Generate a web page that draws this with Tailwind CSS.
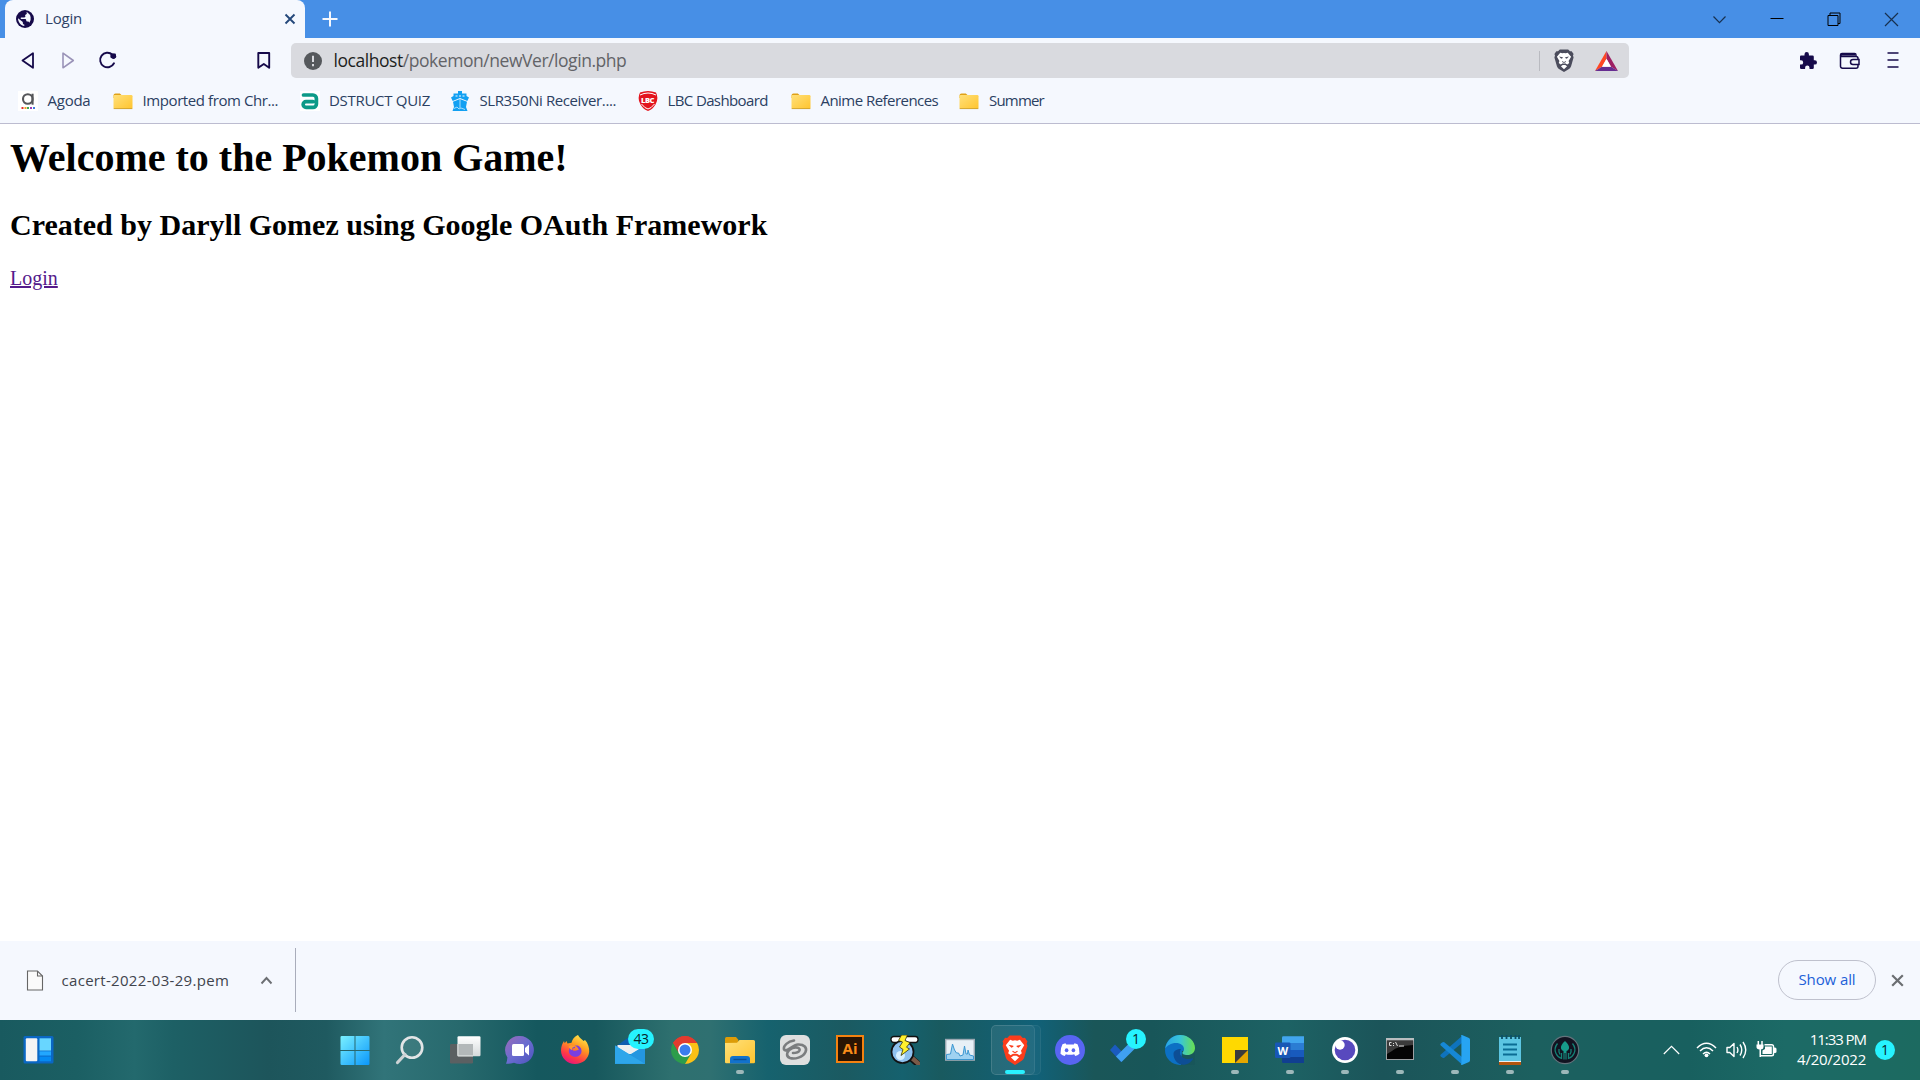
<!DOCTYPE html>
<html lang="en">
<head>
<meta charset="utf-8">
<title>Login</title>
<script src="https://cdn.jsdelivr.net/npm/@tailwindcss/browser@4"></script>
</head>
<body class="flex h-[1080px] w-[1920px] flex-col overflow-hidden bg-white font-['Open_Sans','Noto_Sans',sans-serif] text-[15px]">

<!-- Shared symbols -->
<svg class="absolute size-0">
  <defs>
    <linearGradient id="fold" x1="0" y1="0" x2="1" y2="1"><stop offset="0" stop-color="#ffe07a"/><stop offset="1" stop-color="#ffc42e"/></linearGradient>
    <symbol id="folder" viewBox="0 0 20 20">
      <path d="M.5 4.500a2 2 0 0 1 2-2h4.300l1.700 1.500v3h-8z" fill="#e0a117"/>
      <rect x=".5" y="4" width="19" height="14" rx="1.300" fill="url(#fold)"/>
      <path d="M.7 17.600h18.600" stroke="#c79a2e" stroke-width=".8"/>
    </symbol>
    <symbol id="lion" viewBox="0 0 24 28">
      <path d="M7 .5h10l2.200 2.300 2-.2L23.500 6l-.7 2 .7 2.200-3 10.800q-.5 1.800-2 2.900L12 28l-6.500-4.100q-1.500-1.100-2-2.900L.5 10.200 1.200 8 .5 6l2.300-3.400 2 .2z" fill="currentColor"/>
      <path d="M7.500 4.500l2.500.8 2-.4 2 .4 2.500-.8 4 5-3 5.200.8 2.300-2.300 1.800-2.700-1.300-.2 1.600 2.600 2L12 24.500l-3.700-3.400 2.600-2-.2-1.600L8 18.800 5.700 17l.8-2.300-3-5.200z" fill="#fff"/>
      <path d="M6 9.200l4.500.9v.9l-1.800.8zM18 9.200l-4.500.9v.9l1.800.8z" fill="currentColor"/>
      <path d="M9.700 15.200l2.300 1.300 2.300-1.300" stroke="currentColor" stroke-width="1.100" fill="none"/>
      <path d="M8.500 18.700l2.400-1.200h2.200l2.400 1.200-2.800.7h-1.400z" fill="currentColor"/>
    </symbol>
  </defs>
</svg>

<!-- Tab strip -->
<header class="flex h-[38px] shrink-0 items-center bg-[#478fe6] pl-[5px]">
  <div class="flex h-full w-[300px] items-center rounded-t-[8px] bg-[#f5f8fe] pl-[11px] pr-[9px]">
    <svg class="size-[18px]" viewBox="0 0 18 18"><circle cx="9" cy="9" r="9" fill="#160a4a"/><path d="M10.200 2c1 .8.900 2-.2 2.500-.9.400-1 1-.7 1.600.3.700-.2 1.300-1.100 1.300H5.500c-.7 0-1 .5-.8 1 .3.500 1 .5 2 .5h2.200c1 0 1.300.6 1.300 1.400 0 .9.500 1.200 1.300 1.200.9 0 1.600.4 1.900 1.200a7.200 7.200 0 0 0-1.900-10.200Q10.900 2.200 10.200 2z" fill="#f5f8fe"/><path d="M2 8.300c0 4 3 7.300 6.300 7.700v-1.500c-.9 0-1.500-.7-1.500-1.500v-.9z" fill="#f5f8fe"/></svg>
    <span class="ml-[11px] grow whitespace-nowrap pb-px tracking-[-0.200px] text-[#2f4367]">Login</span>
    <svg class="size-[12px]" viewBox="0 0 12 12"><path d="M1.500 1.500l9 9m0-9l-9 9" stroke="#24487a" stroke-width="1.900"/></svg>
  </div>
  <svg class="ml-[17px] size-[16px]" viewBox="0 0 16 16"><path d="M8 .5v15M.5 8h15" stroke="#f5f8fe" stroke-width="2"/></svg>
  <div class="ml-auto flex items-center gap-[43px] pr-[21.500px]">
    <svg class="size-[15px]" viewBox="0 0 15 15"><path d="M1.500 4.500l6 6.200 6-6.200" stroke="#17304f" stroke-width="1.200" fill="none"/></svg>
    <svg class="size-[14px]" viewBox="0 0 14 14"><path d="M.5 6.500h13" stroke="#000" stroke-width="1"/></svg>
    <svg class="size-[14px]" viewBox="0 0 14 14"><path d="M1 3.500h10v10H1zM3 3V1h10v10.500h-2" stroke="#000" stroke-width="1" fill="none"/></svg>
    <svg class="size-[15px]" viewBox="0 0 15 15"><path d="M1 1l13 13M14 1L1 14" stroke="#17304f" stroke-width="1.200"/></svg>
  </div>
</header>

<!-- Navigation bar -->
<nav class="flex h-[45px] shrink-0 items-center bg-[#f5f8fe] pl-[18px] pr-[17px] text-[#160a4a]">
  <svg class="size-5" viewBox="0 0 20 20"><path d="M15 2.200v14.600L4.500 9.500z" stroke="currentColor" stroke-width="1.800" stroke-linejoin="round" fill="none"/></svg>
  <svg class="ml-5 size-5" viewBox="0 0 20 20"><path d="M5 2.200v14.600L15.300 9.500z" stroke="#9a93b8" stroke-width="1.600" stroke-linejoin="round" fill="none"/></svg>
  <svg class="ml-5 size-5" viewBox="0 0 20 20"><path d="M14.300 3.500A7.300 7.300 0 1 0 16 12.300" stroke="currentColor" stroke-width="1.900" stroke-linecap="round" fill="none"/><path d="M12.500 3.100l5-.6.800 3.500-2.400 2-3.400-1.500z" fill="currentColor"/><circle cx="15.400" cy="5.100" r="2.700" fill="currentColor"/></svg>
  <svg class="ml-[136px] size-5" viewBox="0 0 20 20"><path d="M4.300 2h10.900v14.800L9.800 13l-5.500 3.800z" stroke="currentColor" stroke-width="1.900" stroke-linejoin="round" fill="none"/></svg>
  <div class="ml-[17px] flex h-[35px] w-[1338px] items-center rounded-[5px] bg-[#d9dadf] pl-[13px] pr-[11px]">
    <svg class="size-[18px]" viewBox="0 0 18 18"><circle cx="9" cy="9" r="9" fill="#55585c"/><path d="M9 3.800v6.200M9 12v2.300" stroke="#d9dadf" stroke-width="2"/></svg>
    <p class="ml-[11.500px] grow whitespace-nowrap text-[17.500px] tracking-[-0.450px] text-[#626367]"><span class="text-[#1d1e21]">localhost</span>/pokemon/newVer/login.php</p>
    <span class="h-5 w-px bg-[#b9bac0]"></span>
    <svg class="ml-[14px] h-[23px] w-5 text-[#4b4c5c]" viewBox="0 0 24 28" preserveAspectRatio="none"><use href="#lion" width="24" height="28"/></svg>
    <svg class="ml-[21px] h-[20px] w-[23px]" viewBox="0 0 23 20"><path d="M11.500 0L0 20l7-4.300 4.500-8z" fill="#ff4724"/><path d="M11.500 0L23 20l-7-4.300-4.500-8z" fill="#9e1f63"/><path d="M0 20h23l-7-4.300H7z" fill="#662d91"/><path d="M11.500 7.700L16 15.700H7z" fill="#fff"/></svg>
  </div>
  <svg class="ml-auto size-5" viewBox="0 0 20 20"><path d="M3 4.500h3.500V3.200a2.200 2.200 0 0 1 4.400 0v1.300h3.600q1.300 0 1.300 1.300v3.400h1a2.200 2.200 0 0 1 0 4.400h-1v3.100q0 1.300-1.300 1.300h-3v-1.200a2.200 2.200 0 0 0-4.400 0V18H3.300Q2 18 2 16.700v-3.100h1a2.200 2.200 0 0 0 0-4.400H2V5.800q0-1.300 1-1.300z" fill="currentColor"/></svg>
  <svg class="ml-[21.500px] h-5 w-[21px]" viewBox="0 0 21 20" fill="none" stroke="currentColor" stroke-width="1.500"><path d="M1.500 4v11.200a2 2 0 0 0 2 2h13.500a2 2 0 0 0 2-2V7.500a2 2 0 0 0-2-2H3a1.500 1.500 0 0 1 0-3h12.500a1.500 1.500 0 0 1 1.500 1.500v1.500M2 3.800h14"/><path d="M20 8.500h-6a2.500 2.500 0 0 0 0 5h6z" fill="#f5f8fe"/></svg>
  <svg class="ml-[22.500px] mr-[.5px] size-5" viewBox="0 0 20 20"><path d="M4.500 2h11M4.500 9h11M4.500 16h11" stroke="currentColor" stroke-width="1.700"/></svg>
</nav>

<!-- Bookmarks bar -->
<div class="flex h-[41px] shrink-0 items-center whitespace-nowrap border-b border-[#bcbcd0] bg-[#f5f8fe] pb-[5px] pl-[18px] text-[#2b4062]">
  <div class="flex w-[95px] items-center gap-[9.500px]">
    <svg class="size-5" viewBox="0 0 20 20"><path d="M0 0h20v20H0z" fill="#fff"/><circle cx="9.800" cy="8" r="4.800" stroke="#55565a" stroke-width="2.100" fill="none"/><path d="M14.600 2.700v11" stroke="#55565a" stroke-width="2"/><path d="M3.500 17h2" stroke="#e12d2d" stroke-width="2"/><path d="M6.500 17h2" stroke="#f2a121" stroke-width="2"/><path d="M9 17h2" stroke="#3aa757" stroke-width="2"/><path d="M12 17h2" stroke="#9b3fb5" stroke-width="2"/><path d="M15 17h2" stroke="#3c7ee0" stroke-width="2"/></svg>
    <span class="pb-px tracking-[-0.250px]">Agoda</span>
  </div>
  <div class="flex w-[186.500px] items-center gap-[9.500px]"><svg class="size-5"><use href="#folder"/></svg><span class="pb-px tracking-[-0.410px]">Imported from Chr...</span></div>
  <div class="flex w-[150.500px] items-center gap-[9.500px]">
    <svg class="size-5" viewBox="0 0 20 20"><path d="M0 0h20v20H0z" fill="#fff"/><path d="M3.500 4H13a3.400 3.400 0 0 1 3.400 3.400V13a3.400 3.400 0 0 1-3.400 3.400H6a2.800 2.800 0 0 1 0-5.700h7" stroke="#0d9a87" stroke-width="3.700" stroke-linecap="round" fill="none"/></svg>
    <span class="pb-px tracking-[-0.300px]">DSTRUCT QUIZ</span>
  </div>
  <div class="flex w-[187.500px] items-center gap-[9.500px]">
    <svg class="size-5" viewBox="0 0 20 20" fill="#12a0f2"><path d="M8 0h4v2.500h4.500V5L19 6.500 17.300 10l-7.300-3-7.300 3L1 6.500 3.500 5V2.500H8z"/><path d="M10 8l7 2.700-1 5.300 1.500 4h-15L4 16l-1-5.300z"/><path d="M5.500 4.500h2v1h-2zM9 4.500h2v1H9zM12.500 4.500h2v1h-2z" fill="#f5f8fe"/><path d="M10 8v9M4 17.500l3-1.500 2 2 2-1 4 1.500" stroke="#a6dcfc" stroke-width="1" fill="none"/></svg>
    <span class="pb-px tracking-[-0.400px]">SLR350Ni Receiver....</span>
  </div>
  <div class="flex w-[153px] items-center gap-[10px]">
    <div class="relative size-5"><svg class="size-5" viewBox="0 0 20 20"><path d="M2 1.500Q10-1.500 18 1.500q3 6-.5 12-3 5-7.500 6.500-4.500-1.500-7.500-6.500-3.500-6-.5-12z" fill="#e3141e"/><path d="M2 4q8-4 16 0M3.500 13Q7 17.500 10 18q3-.5 6.500-5" stroke="#fff" stroke-width="1" fill="none"/></svg><span class="absolute inset-x-0 top-[5px] text-center font-['Open_Sans',sans-serif] text-[7.500px] font-extrabold leading-[9px] tracking-[-0.500px] text-white">LBC</span></div>
    <span class="pb-px tracking-[-0.620px]">LBC Dashboard</span>
  </div>
  <div class="flex w-[168.500px] items-center gap-[10px]"><svg class="size-5"><use href="#folder"/></svg><span class="pb-px tracking-[-0.540px]">Anime References</span></div>
  <div class="flex items-center gap-[10px]"><svg class="size-5"><use href="#folder"/></svg><span class="pb-px tracking-[-0.800px]">Summer</span></div>
</div>

<!-- Page -->
<main class="grow px-[10px] pt-[11px] font-['Liberation_Serif',serif] text-black">
  <h1 class="text-[40px] font-bold leading-[46px]">Welcome to the Pokemon Game!</h1>
  <h2 class="mt-[27px] text-[30px] font-bold leading-[34px] tracking-[0.010px]">Created by Daryll Gomez using Google OAuth Framework</h2>
  <a class="mt-[25px] block w-fit text-[20px] leading-[23px] text-[#551a8b] underline" href="#">Login</a>
</main>

<!-- Download shelf -->
<section class="flex h-[79px] shrink-0 items-center bg-[#f5f8fe] pb-px pl-[26px] pr-[16px]">
  <svg class="h-[21px] w-[18px]" viewBox="0 0 18 21"><path d="M1.500 1h10l5 5v14h-15z" fill="#fafafa" stroke="#666" stroke-width="1.100"/><path d="M11.500 1v5h5" fill="none" stroke="#666" stroke-width="1.100"/></svg>
  <span class="ml-[17.500px] w-[198.500px] whitespace-nowrap tracking-[0.310px] text-[#40444d]">cacert-2022-03-29.pem</span>
  <svg class="h-[9px] w-[13px]" viewBox="0 0 13 9"><path d="M1.500 7.500l5-5.500 5 5.500" fill="none" stroke="#6c6f73" stroke-width="1.900"/></svg>
  <span class="ml-[22px] h-16 w-px bg-[#a9adbb]"></span>
  <button class="ml-auto h-10 w-[98px] rounded-full border border-[#bfc1cd] pb-px tracking-[-0.100px] text-[#2160d8]">Show all</button>
  <svg class="ml-[15px] size-[13px]" viewBox="0 0 13 13"><path d="M1.200 1.200l10.600 10.600m0-10.600L1.200 11.800" stroke="#6b6e72" stroke-width="2.200"/></svg>
</section>

<!-- Taskbar -->
<footer class="flex h-[60px] shrink-0 bg-[linear-gradient(90deg,#195a5f_0%,#1b5f63_4%,#23696d_7%,#1d6065_9%,#1d555b_14%,#1f5a60_17%,#317479_20%,#27696d_24%,#15585e_28%,#17585d_31%,#2e706f_35%,#2f7071_37%,#16626e_40%,#1b5a61_44%,#15616e_47%,#195a5f_49%,#116178_54%,#1a5658_57%,#185659_60%,#1d6264_67%,#1b5459_72%,#1c605f_80%,#18605f_88%,#1c6a66_93%,#1c6a60_100%)]">
  <svg class="ml-[22.500px] mt-[15px] h-[30px] w-[31px]" viewBox="0 0 31 30"><rect x=".5" y="1" width="30" height="27.500" rx="1.500" fill="#0a67c4"/><rect x="2.800" y="3.300" width="11.500" height="23" rx="1" fill="#f4f4f4"/><path d="M16.500 3.300h11.500v12.300H16.500z" fill="#68d6ff"/><path d="M16.500 16.300h11.500v4.300H16.500z" fill="#22a7ff"/><path d="M16.500 21.500h11.500v4.800H16.500z" fill="#058af2"/></svg>

  <div class="ml-[274px] flex">
    <div class="flex w-[55px] justify-center pt-[15px]"><svg class="size-[30px]" viewBox="0 0 30 30"><defs><linearGradient id="win" x1="0" y1="0" x2="30" y2="30" gradientUnits="userSpaceOnUse"><stop stop-color="#7df3ff"/><stop offset="1" stop-color="#0996fb"/></linearGradient></defs><path d="M.5 2.300q0-1.300 1.300-1.300h12.700v14H.5zM15.500 1h12.800q1.200 0 1.200 1.300V15h-14zM.5 16h14v14H1.800Q.5 30 .5 28.700zM15.500 16h14v12.700q0 1.300-1.200 1.300H15.500z" fill="url(#win)"/></svg></div>
    <div class="flex w-[55px] justify-center pt-[15px]"><svg class="size-[30px]" viewBox="0 0 30 30"><circle cx="17" cy="12.500" r="10.300" fill="#fff" fill-opacity=".07" stroke="#e2e5e6" stroke-width="2.600"/><path d="M10 19.500l-7.500 8" stroke="#cdd3d5" stroke-width="3.200" stroke-linecap="round"/></svg></div>
    <div class="flex w-[55px] justify-center pt-[15px]"><svg class="size-[30px] overflow-visible" viewBox="0 0 30 30"><defs><linearGradient id="tv" x1="0" y1="0" x2="0" y2="1"><stop stop-color="#fff"/><stop offset="1" stop-color="#d5dadb"/></linearGradient></defs><rect x="0" y="9" width="23" height="19.500" rx="1.200" fill="#5b6062"/><rect x="7.500" y="1.300" width="23" height="20" rx="1.200" fill="url(#tv)"/><path d="M7.500 9H23v12.300H7.500z" fill="#b3b8b9"/><path d="M8 9v11.800h15" stroke="#dde0e0" stroke-width="1" fill="none"/></svg></div>
    <div class="flex w-[55px] justify-center pt-[15px]"><svg class="size-[30px]" viewBox="0 0 30 30"><defs><linearGradient id="chat" x1="0" y1="0" x2="1" y2="1"><stop stop-color="#9a6bb8"/><stop offset=".5" stop-color="#6a6cd0"/><stop offset="1" stop-color="#4b53bc"/></linearGradient></defs><path d="M15 1a14 14 0 1 1-6 26.700Q5 29 1 28.800q1.200-3 1.400-6.300A14 14 0 0 1 15 1z" fill="url(#chat)"/><rect x="7" y="9" width="12" height="12" rx="1.500" fill="#fff"/><path d="M20 13l4-3.500v11L20 17z" fill="#fff"/></svg></div>
    <div class="flex w-[55px] justify-center pt-[15px]"><svg class="size-[30px]" viewBox="0 0 30 30"><defs><linearGradient id="ff" x1=".8" y1="0" x2=".3" y2="1"><stop stop-color="#fff04f"/><stop offset=".4" stop-color="#ff9a20"/><stop offset=".75" stop-color="#ff3a45"/><stop offset="1" stop-color="#e6127f"/></linearGradient></defs><path d="M18 0c1.500 3 4 4 5.500 6l1.500-1c3 3 4.500 8 4.200 12-.8 7-6.500 12-14.200 12S1 23 1 15.500c0-4 1.300-7 3-9.500l.7 2.300L6.500 6l1 2.500 4-.8C13 3 15 1.500 18 0z" fill="url(#ff)"/><path d="M10 11.500c2.500-1.500 5-.2 5.200 1.200l-3 1c0 2 2 2.500 4 1.800 1-.4 2-1 2.600-.2-.4-2-1.700-4-3.800-4.600 3-.8 6.500 1.300 6.500 5.200 0 3.500-3 5.800-6.300 5.800-3.600 0-6.400-2.500-6.400-6z" fill="#7a3fe0"/><path d="M8.500 12c1.500-2 4-2.500 6.500-.5l-2.500 1.200-1 2.500z" fill="#ff9d2b"/></svg></div>
    <div class="flex w-[55px] justify-center pt-[15px]"><div class="relative size-[30px]"><svg class="size-[30px]" viewBox="0 0 30 30"><path d="M0 12L14 2l16 10v6H0z" fill="#0e5db0"/><path d="M2.500 10h25v9h-25z" fill="#eceef0"/><path d="M0 10.500L15 20 30 10.500V28.700H0z" fill="#35b5f0"/><path d="M0 28.700L30 10.500v18.200z" fill="#2496e0"/><path d="M0 28.700h30L15 19.500z" fill="#1f8edb"/><path d="M0 10.500L30 28.700H0z" fill="#2ea6ea"/></svg><span class="absolute left-[13px] top-[-6px] flex h-5 w-[26px] items-center justify-center rounded-full bg-[#26f3ff] text-[14px] leading-none tracking-[-0.400px] text-[#07262b]">43</span></div></div>
    <div class="flex w-[55px] justify-center pt-[15px]"><svg class="size-[30px]" viewBox="0 0 30 30"><path d="M2.900 8A14 14 0 0 1 27.100 8L15 15z" fill="#e33b2e"/><path d="M15 8h12.100A14 14 0 0 0 2.900 8L9 18.500z" fill="#e33b2e"/><path d="M2.900 8A14 14 0 0 0 15 29l6.200-10.500L9 18.500z" fill="#2c9d4b"/><path d="M27.100 8H15l6.200 10.500L15 29A14 14 0 0 0 27.100 8z" fill="#fbc116"/><circle cx="15" cy="15" r="7" fill="#fff"/><circle cx="15" cy="15" r="5.500" fill="#3b7ded"/></svg></div>
    <div class="flex w-[55px] flex-col items-center pt-[15px]"><svg class="size-[30px]" viewBox="0 0 30 30"><path d="M0 3.500q0-1.500 1.500-1.500H11l2.500 3v5H0z" fill="#dd9c07"/><path d="M0 8l12-.3L14.500 5h14q1.500 0 1.500 1.500V27q0 1.300-1.300 1.300H1.300Q0 28.300 0 27z" fill="url(#fold)"/><path d="M5 28.500V24q0-3 3-3h14q3 0 3 3v4.500z" fill="#1272cc"/><path d="M8.500 24.500h13" stroke="#0a4f96" stroke-width="1.400"/></svg><span class="mt-[5px] h-1 w-2 rounded-full bg-[#9db8ba]"></span></div>
    <div class="flex w-[55px] justify-center pt-[15px]"><svg class="size-[30px]" viewBox="0 0 30 30"><rect width="30" height="30" rx="6" fill="#dedfdf"/><path d="M14 5.500C8 6.500 3 10.500 4 14.500c2.500 3.500 8-4.500 14-5 6-.3 9.500 3 7.500 7.500-2.500 5.500-11 7.500-15.500 6-5-2-3-8 2.500-10 4-1.500 8 0 7 2.500-1 2-4 2.500-6.500 2.500" stroke="#7b7d7f" stroke-width="2.600" stroke-linecap="round" fill="none"/></svg></div>
    <div class="flex w-[55px] justify-center pt-[15px]"><div class="flex h-[28px] w-[28px] items-center justify-center border-2 border-[#f58210] bg-[#2a1403] pb-[1px] text-[15px] font-bold leading-none text-[#fa8c19]">Ai</div></div>
    <div class="flex w-[55px] justify-center pt-[15px]"><svg class="size-[30px]" viewBox="0 0 30 30"><path d="M20 22l9 8" stroke="#111" stroke-width="6.500"/><path d="M22 23l8 7" stroke="#7a5a48" stroke-width="4.500"/><rect x="1" y="1.500" width="27" height="6" rx="2.800" fill="#fff" stroke="#111" stroke-width="1.300"/><circle cx="12.500" cy="17" r="11" fill="#8fc2ef" stroke="#111" stroke-width="1.700"/><circle cx="10.500" cy="20.500" r="4.500" fill="#d8f0ff"/><path d="M11.500 0h6L15 5.500l5 2.200-3.500 4.500 3 1.800-8.500 6.500 2-6-3.500-2.500 3-5-4-1.500z" fill="#fff12d" stroke="#383509" stroke-width=".8"/></svg></div>
    <div class="flex w-[55px] justify-center pt-[15px]"><svg class="size-[30px]" viewBox="0 0 30 30"><rect x=".7" y="4.500" width="28.600" height="20.600" fill="#e8f0f6" stroke="#9ba8b2" stroke-width="1.400"/><path d="M1.500 19.500l4-.5 2-10 2 6 2 3 2 0 1.500 3 3-1 1.500-9 1.500 8 1.500 0 .5-4 1.500 5 4 1v3.500h-27z" fill="#9fd2f1" stroke="#3c97d1" stroke-width="1"/></svg></div>
    <div class="relative flex w-[55px] flex-col items-center pt-[15px]">
      <span class="absolute left-[3px] top-[5px] h-[50px] w-[50px] rounded-[5px] border border-white/6 bg-white/3"></span>
      <span class="absolute left-[3px] top-[5px] h-[50px] w-[44px] rounded-[5px] border border-white/8 bg-white/5"></span>
      <svg class="relative h-[30px] w-[26px] text-[#fb3d1c]" viewBox="0 0 24 28" preserveAspectRatio="none"><use href="#lion" width="24" height="28"/></svg><span class="relative mt-[5px] h-1 w-5 rounded-full bg-[#29f1ff]"></span></div>
    <div class="flex w-[55px] justify-center pt-[15px]"><svg class="size-[30px]" viewBox="0 0 30 30"><circle cx="15" cy="15" r="15" fill="#5865f2"/><path d="M10.500 8.300q-1.700.3-3 1-2.200 3.700-2 9.500 2 1.700 4.300 2.200l1-1.700q4.200 1 8.400 0l1 1.700q2.300-.5 4.300-2.200.2-5.800-2-9.500-1.300-.7-3-1l-.7 1.200h-7.600z" fill="#fff"/><ellipse cx="11.600" cy="15.300" rx="1.800" ry="2" fill="#5865f2"/><ellipse cx="18.400" cy="15.300" rx="1.800" ry="2" fill="#5865f2"/></svg></div>
    <div class="flex w-[55px] justify-center pt-[15px]"><div class="relative size-[30px]"><svg class="size-[30px]" viewBox="0 0 30 30"><path d="M0 15l5-5.500 11.500 12L11 27z" fill="#1b5bbf"/><path d="M6 21.500L24.500 3 30 8.500 11.500 27z" fill="#3fa0f0"/></svg><span class="absolute left-[16px] top-[-6px] flex size-5 items-center justify-center rounded-full bg-[#26f3ff] text-[14px] leading-none text-[#07262b]">1</span></div></div>
    <div class="flex w-[55px] justify-center pt-[15px]"><svg class="size-[30px]" viewBox="0 0 30 30"><defs><linearGradient id="edge" x1="0" y1=".3" x2="1" y2=".3"><stop stop-color="#29a5e6"/><stop offset=".5" stop-color="#38c5d8"/><stop offset="1" stop-color="#6be04e"/></linearGradient></defs><circle cx="15" cy="15" r="15" fill="#0c70c4"/><path d="M30 14v16H16l1-14z" fill="#18565a"/><path d="M.2 13.500C1.500 5.500 7.500 0 15 0c9 0 15 6.500 15 13 0 4.500-3.500 7-7.500 7s-5.500-1.500-5-2.500c.8-1 1.500-2 1.500-3.500 0-3.500-3.500-6-8-6-5 0-9 2.500-10.800 5.500z" fill="url(#edge)"/><path d="M8.500 19c0 7 6 12 12 10.500 3.500-.8 6-3 7.500-5.500.3-.6-.3-1-.8-.8-2 .8-4.700 1.200-7.200.3-4.500-1.500-6.500-5.500-4-9.500-4 0-7.500 1.500-7.500 5z" fill="#0d4e95"/></svg></div>
    <div class="flex w-[55px] flex-col items-center pt-[15px]"><svg class="size-[30px]" viewBox="0 0 30 30"><path d="M2 2h26v26H2z" fill="#ffd900"/><path d="M15 28V15h13v13z" fill="#e5a700"/><path d="M15 15h13L15 28z" fill="#3b3b3b"/></svg><span class="mt-[5px] h-1 w-2 rounded-full bg-[#9db8ba]"></span></div>
    <div class="flex w-[55px] flex-col items-center pt-[15px]"><div class="relative size-[30px]"><svg class="size-[30px]" viewBox="0 0 30 30"><path d="M7 2.500q0-1.300 1.300-1.300H29V8H7z" fill="#41a5ee"/><path d="M7 8h22v7H7z" fill="#2b7cd3"/><path d="M7 15h22v7H7z" fill="#185abd"/><path d="M7 22h22v6H8.300Q7 28 7 26.700z" fill="#103f91"/><rect x="0" y="7.500" width="15.500" height="15.500" rx="1.300" fill="#1857b5"/></svg><span class="absolute left-0 top-[8px] w-[15.500px] text-center text-[11px] font-bold leading-[15px] text-white">W</span></div><span class="mt-[5px] h-1 w-2 rounded-full bg-[#9db8ba]"></span></div>
    <div class="flex w-[55px] flex-col items-center pt-[15px]"><svg class="size-[30px]" viewBox="0 0 30 30"><circle cx="15" cy="15" r="13" fill="#fff"/><circle cx="15" cy="15" r="10.300" fill="#5849be"/><circle cx="10" cy="10" r="4.700" fill="#fff"/></svg><span class="mt-[5px] h-1 w-2 rounded-full bg-[#9db8ba]"></span></div>
    <div class="flex w-[55px] flex-col items-center pt-[15px]"><svg class="size-[30px]" viewBox="0 0 30 30"><rect x="1.500" y="3.500" width="27" height="21" fill="#050505" stroke="#9da1a3" stroke-width="1"/><path d="M1 3h28v2.500H1z" fill="#b9bdbf"/><path d="M2 6h26v4Q12 11 7 16l-5 3z" fill="#3b3b3b"/><path d="M6.500 7.500h-2v3h2m2-2.500v1m0 1v1m2-4l2 4m1.500 0h5" stroke="#ddd" stroke-width="1" fill="none"/></svg><span class="mt-[5px] h-1 w-2 rounded-full bg-[#9db8ba]"></span></div>
    <div class="flex w-[55px] flex-col items-center pt-[15px]"><svg class="size-[30px]" viewBox="0 0 30 30"><path d="M22 1L.8 19.500q-1 1 0 2l1.800 1.300q.8.500 1.700 0L22 8z" fill="#0f73bd"/><path d="M22 29.500L.8 10.500q-1-1 0-2l1.800-1.300q.8-.5 1.700 0L22 22z" fill="#1688d6"/><path d="M22 0l7 3q1 .6 1 1.700v20.600q0 1.100-1 1.700l-7 3q-1 0-1.500-.7.900.4.900-.7V1.400q0-1.100-.9-.7.600-.7 1.500-.7z" fill="#27a4f2"/></svg><span class="mt-[5px] h-1 w-2 rounded-full bg-[#9db8ba]"></span></div>
    <div class="flex w-[55px] flex-col items-center pt-[15px]"><svg class="size-[30px]" viewBox="0 0 30 30"><path d="M4 25h22v5H4z" fill="#b3560f"/><path d="M4 24.500h22v2.500H4z" fill="#eee"/><path d="M4 2h22v24H4z" fill="#5cc5e2"/><path d="M7 0v4m4.500-4v4M16 0v4m4.500-4v4M24 0v4" stroke="#0b5068" stroke-width="1.800"/><path d="M8 9.500h14M8 14.500h14M8 19.500h14" stroke="#0b6d94" stroke-width="1.800"/></svg><span class="mt-[5px] h-1 w-2 rounded-full bg-[#9db8ba]"></span></div>
    <div class="flex w-[55px] flex-col items-center pt-[15px]"><svg class="size-[30px]" viewBox="0 0 30 30"><circle cx="15" cy="15" r="13.700" fill="#121321" stroke="#63737c" stroke-width="1.200"/><path d="M15 6q-4.700 4-4 7.500.7 2 2.500 2.500v8.500h1V18h1v6.500h1V16q1.800-.5 2.500-2.500Q19.700 10 15 6z" fill="#179a8a"/><path d="M7.500 8.500q-4 5-1.500 10 2 4 5.500 5v-5.500M22.500 8.500q4 5 1.500 10-2 4-5.500 5v-5.500M9 14q-.5 3 1 5.500M21 14q.5 3-1 5.500" stroke="#158377" stroke-width="1.300" fill="none"/></svg><span class="mt-[5px] h-1 w-2 rounded-full bg-[#9db8ba]"></span></div>
  </div>

  <div class="ml-auto flex items-center pr-[25px] text-white">
    <svg class="h-[10px] w-[17px]" viewBox="0 0 17 10"><path d="M.8 9l7.700-7.700L16.200 9" fill="none" stroke="#fff" stroke-width="1.200"/></svg>
    <svg class="ml-4 h-[16px] w-[21px]" viewBox="0 0 21 16" fill="none" stroke="#fff" stroke-width="1.500"><path d="M1 6q9.500-9.500 19 0M4 9q6.500-6.500 13 0M7 12q3.500-3.500 7 0"/><circle cx="10.500" cy="13.300" r="1.900" fill="#fff" stroke="none"/></svg>
    <svg class="ml-[9px] h-[18px] w-[21px]" viewBox="0 0 21 18" fill="none" stroke="#fff" stroke-width="1.400"><path d="M1 6.500h2.800L8 2.500v13L3.800 11.500H1z" stroke-linejoin="round"/><path d="M11 6q1.800 3 0 6M14 3.500q3.500 5.500 0 11M17 1q5.500 8 0 16"/></svg>
    <svg class="ml-[9px] h-[18px] w-[21px]" viewBox="0 0 21 18"><path d="M2.300 0v4M6 0v4" stroke="#fff" stroke-width="1.500"/><path d="M.5 3.500h7V6Q7.500 8 5 8.500V16H3.500V8.500Q.5 8 .5 6z" fill="#fff"/><path d="M8.500 3.700h7.200q1.800 0 1.800 1.800v7.500q0 1.800-1.800 1.800H5" stroke="#fff" stroke-width="1.400" fill="none"/><path d="M9 5.500h6.800v7.500H6.500V9.500L9 8z" fill="#fff"/><path d="M18 6.500h1q1.500 0 1.500 1.500v2.500q0 1.500-1.500 1.500h-1z" fill="#fff"/></svg>
    <div class="ml-[20px] flex w-[69px] flex-col items-end whitespace-nowrap pb-[2px] text-[15px] leading-5">
      <span class="tracking-[-1.050px]">11:33 PM</span><span class="tracking-[-0.230px]">4/20/2022</span>
    </div>
    <span class="ml-[9px] flex size-5 items-center justify-center rounded-full bg-[#26f3ff] text-[14px] leading-none text-[#07262b]">1</span>
  </div>
</footer>
</body>
</html>
